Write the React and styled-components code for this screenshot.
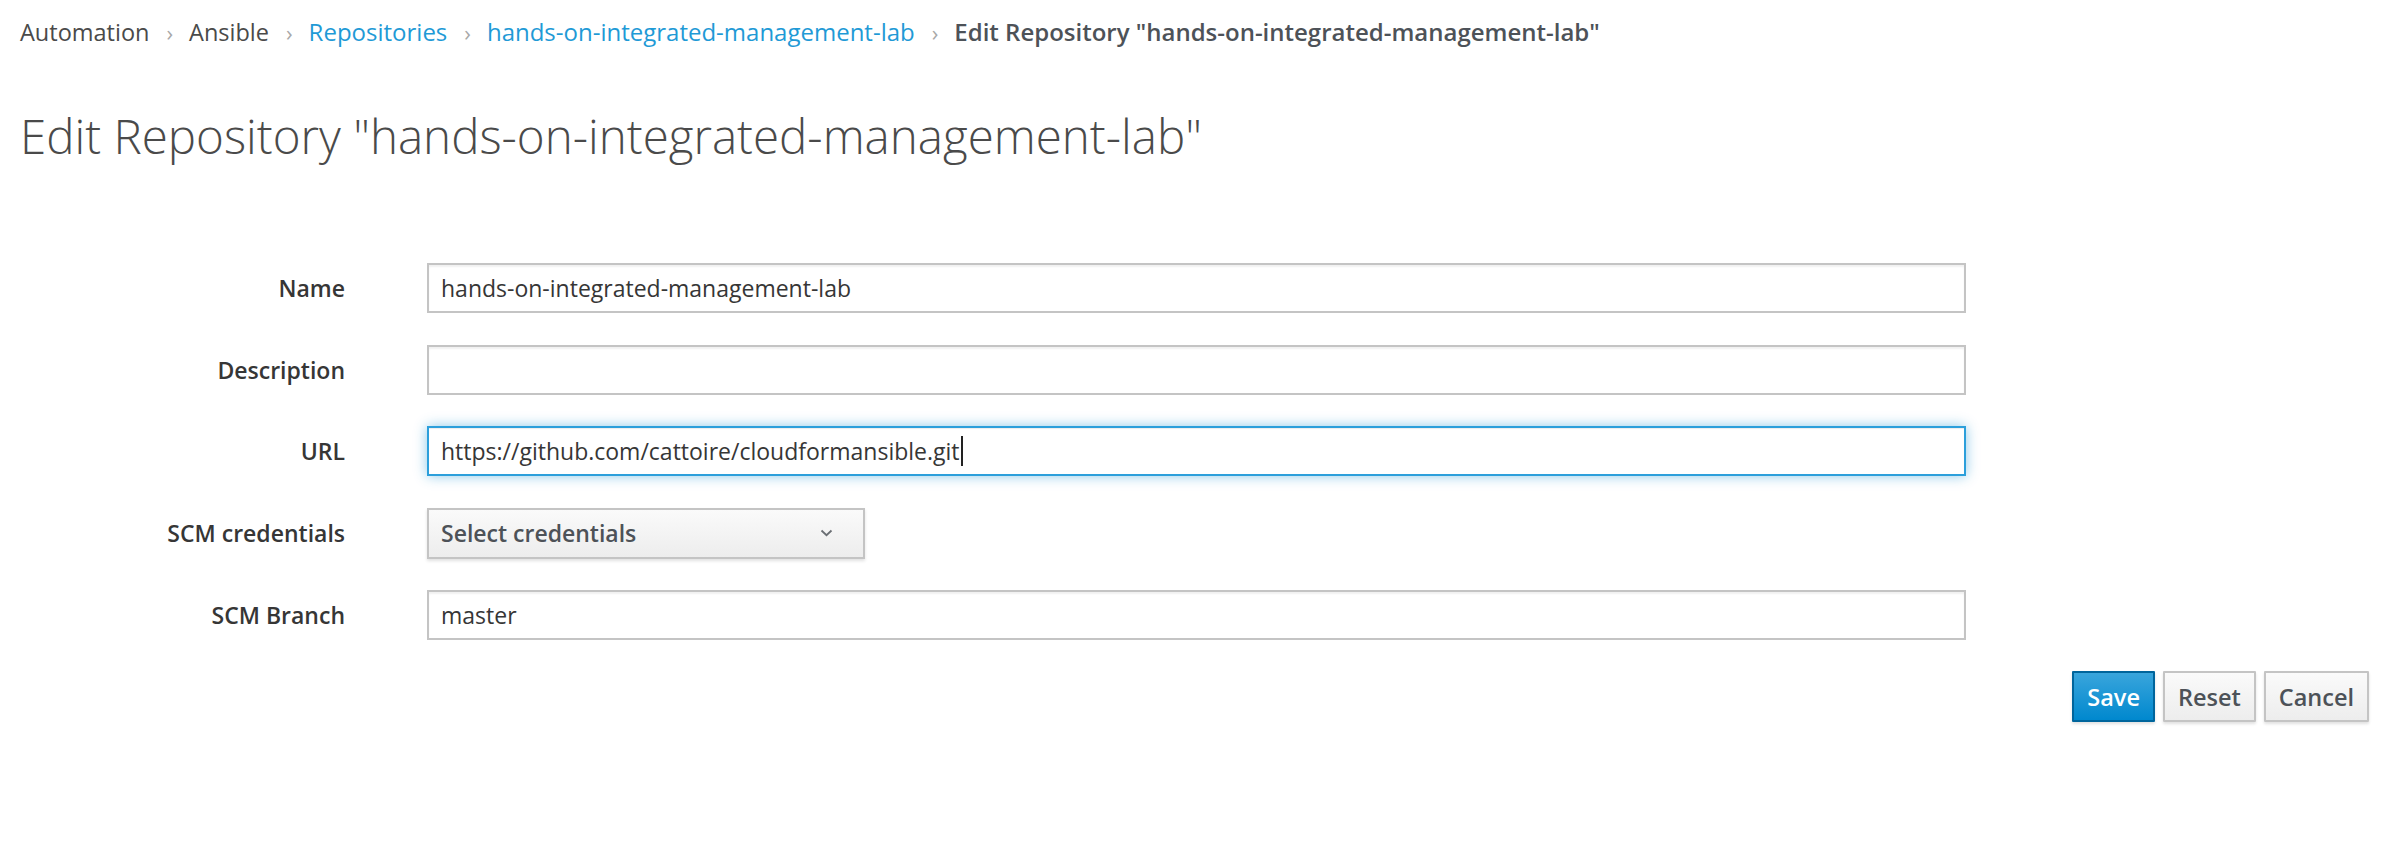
import React from "react";
import styled, { createGlobalStyle } from "styled-components";

const GlobalStyle = createGlobalStyle`
  html, body {
    margin: 0;
    padding: 0;
    background: #fff;
  }
  body {
    font-family: "Open Sans", "Noto Sans", sans-serif;
    color: #363636;
  }
`;

const crumbs = [
  { label: "Automation" },
  { label: "Ansible" },
  { label: "Repositories", link: true },
  { label: "hands-on-integrated-management-lab", link: true },
  { label: 'Edit Repository "hands-on-integrated-management-lab"', active: true },
];

const fields = [
  { label: "Name", value: "hands-on-integrated-management-lab" },
  { label: "Description", value: "" },
  { label: "URL", value: "https://github.com/cattoire/cloudformansible.git", focused: true },
  { label: "SCM credentials", select: "Select credentials" },
  { label: "SCM Branch", value: "master" },
];

export default function App() {
  return (
    <>
      <GlobalStyle />
      <Page>
        <Breadcrumb>
          {crumbs.map((c, i) => (
            <React.Fragment key={c.label}>
              {i > 0 && <Separator>›</Separator>}
              <Crumb $link={c.link} $active={c.active}>
                {c.label}
              </Crumb>
            </React.Fragment>
          ))}
        </Breadcrumb>

        <Title>Edit Repository "hands-on-integrated-management-lab"</Title>

        <Form>
          {fields.map((f) => (
            <Row key={f.label}>
              <Label>{f.label}</Label>
              {f.select ? (
                <Select>
                  <span>{f.select}</span>
                  <svg width="13" height="8" viewBox="0 0 13 8">
                    <path
                      d="M1.5 1.5 L6.5 6.2 L11.5 1.5"
                      fill="none"
                      stroke="#6a6e73"
                      strokeWidth="1.8"
                    />
                  </svg>
                </Select>
              ) : (
                <Input $focused={f.focused}>
                  {f.value}
                  {f.focused && <Caret />}
                </Input>
              )}
            </Row>
          ))}
        </Form>

        <Actions>
          <Button $primary>Save</Button>
          <Button>Reset</Button>
          <Button>Cancel</Button>
        </Actions>
      </Page>
    </>
  );
}

const Page = styled.div`
  padding: 16px 39px 60px 20px;
  min-height: 862px;
  box-sizing: border-box;
`;

const Breadcrumb = styled.nav`
  display: flex;
  align-items: center;
  font-size: 23.5px;
  line-height: 32px;
  height: 32px;
`;

const Crumb = styled.span`
  color: ${(p) => (p.$link ? "#1f9ad6" : p.$active ? "#4d5258" : "#4a4a4a")};
  font-weight: ${(p) => (p.$active ? 600 : 400)};
  font-size: ${(p) => (p.$active || p.$link ? "24px" : "23.5px")};
`;

const Separator = styled.span`
  color: #a8a8a8;
  font-size: 22px;
  padding: 0 16px 0 17px;
`;

const Title = styled.h1`
  margin: 63px 0 0 0;
  font-size: 47.5px;
  line-height: 50px;
  font-weight: 300;
  color: #4a4a4a;
`;

const Form = styled.div`
  display: flex;
  flex-direction: column;
  gap: 31.5px;
  margin-top: 102px;
`;

const Row = styled.div`
  display: grid;
  grid-template-columns: 325px 1539px;
  column-gap: 82px;
  align-items: center;
`;

const Label = styled.label`
  text-align: right;
  font-size: 23px;
  font-weight: 600;
  color: #363636;
`;

const Input = styled.div`
  box-sizing: border-box;
  height: 50px;
  display: flex;
  align-items: center;
  padding: 0 12px;
  font-size: 23px;
  color: #363636;
  background: #fff;
  border: 2px solid ${(p) => (p.$focused ? "#2c9fdb" : "#c4c4c4")};
  box-shadow: ${(p) =>
    p.$focused
      ? "inset 0 1px 1px rgba(3,3,3,0.075), 0 0 12px rgba(0,136,206,0.45)"
      : "inset 0 2px 2px rgba(3,3,3,0.06)"};
  white-space: pre;
`;

const Caret = styled.span`
  display: inline-block;
  width: 2px;
  height: 30px;
  background: #222;
  margin-left: 1px;
`;

const Select = styled.div`
  box-sizing: border-box;
  width: 438px;
  height: 51px;
  display: flex;
  align-items: center;
  justify-content: space-between;
  padding: 0 30px 0 12px;
  font-size: 23px;
  font-weight: 600;
  color: #4d5258;
  background: linear-gradient(to bottom, #fafafa 0%, #ededed 100%);
  border: 2px solid #c4c4c4;
  box-shadow: 0 2px 3px rgba(3, 3, 3, 0.12);
`;

const Actions = styled.div`
  display: flex;
  justify-content: flex-end;
  gap: 8px;
  margin-top: 31px;
`;

const Button = styled.button`
  box-sizing: border-box;
  height: 51px;
  padding: 0 13px;
  font-family: "Open Sans", "Noto Sans", sans-serif;
  font-size: 23.5px;
  font-weight: 600;
  color: ${(p) => (p.$primary ? "#fff" : "#4d5258")};
  background: ${(p) =>
    p.$primary
      ? "linear-gradient(to bottom, #39a5dc 0%, #0088ce 100%)"
      : "linear-gradient(to bottom, #fafafa 0%, #ededed 100%)"};
  border: 2px solid ${(p) => (p.$primary ? "#00659c" : "#c4c4c4")};
  border-radius: 1px;
  box-shadow: 0 2px 3px rgba(3, 3, 3, 0.12);
  cursor: pointer;
`;
